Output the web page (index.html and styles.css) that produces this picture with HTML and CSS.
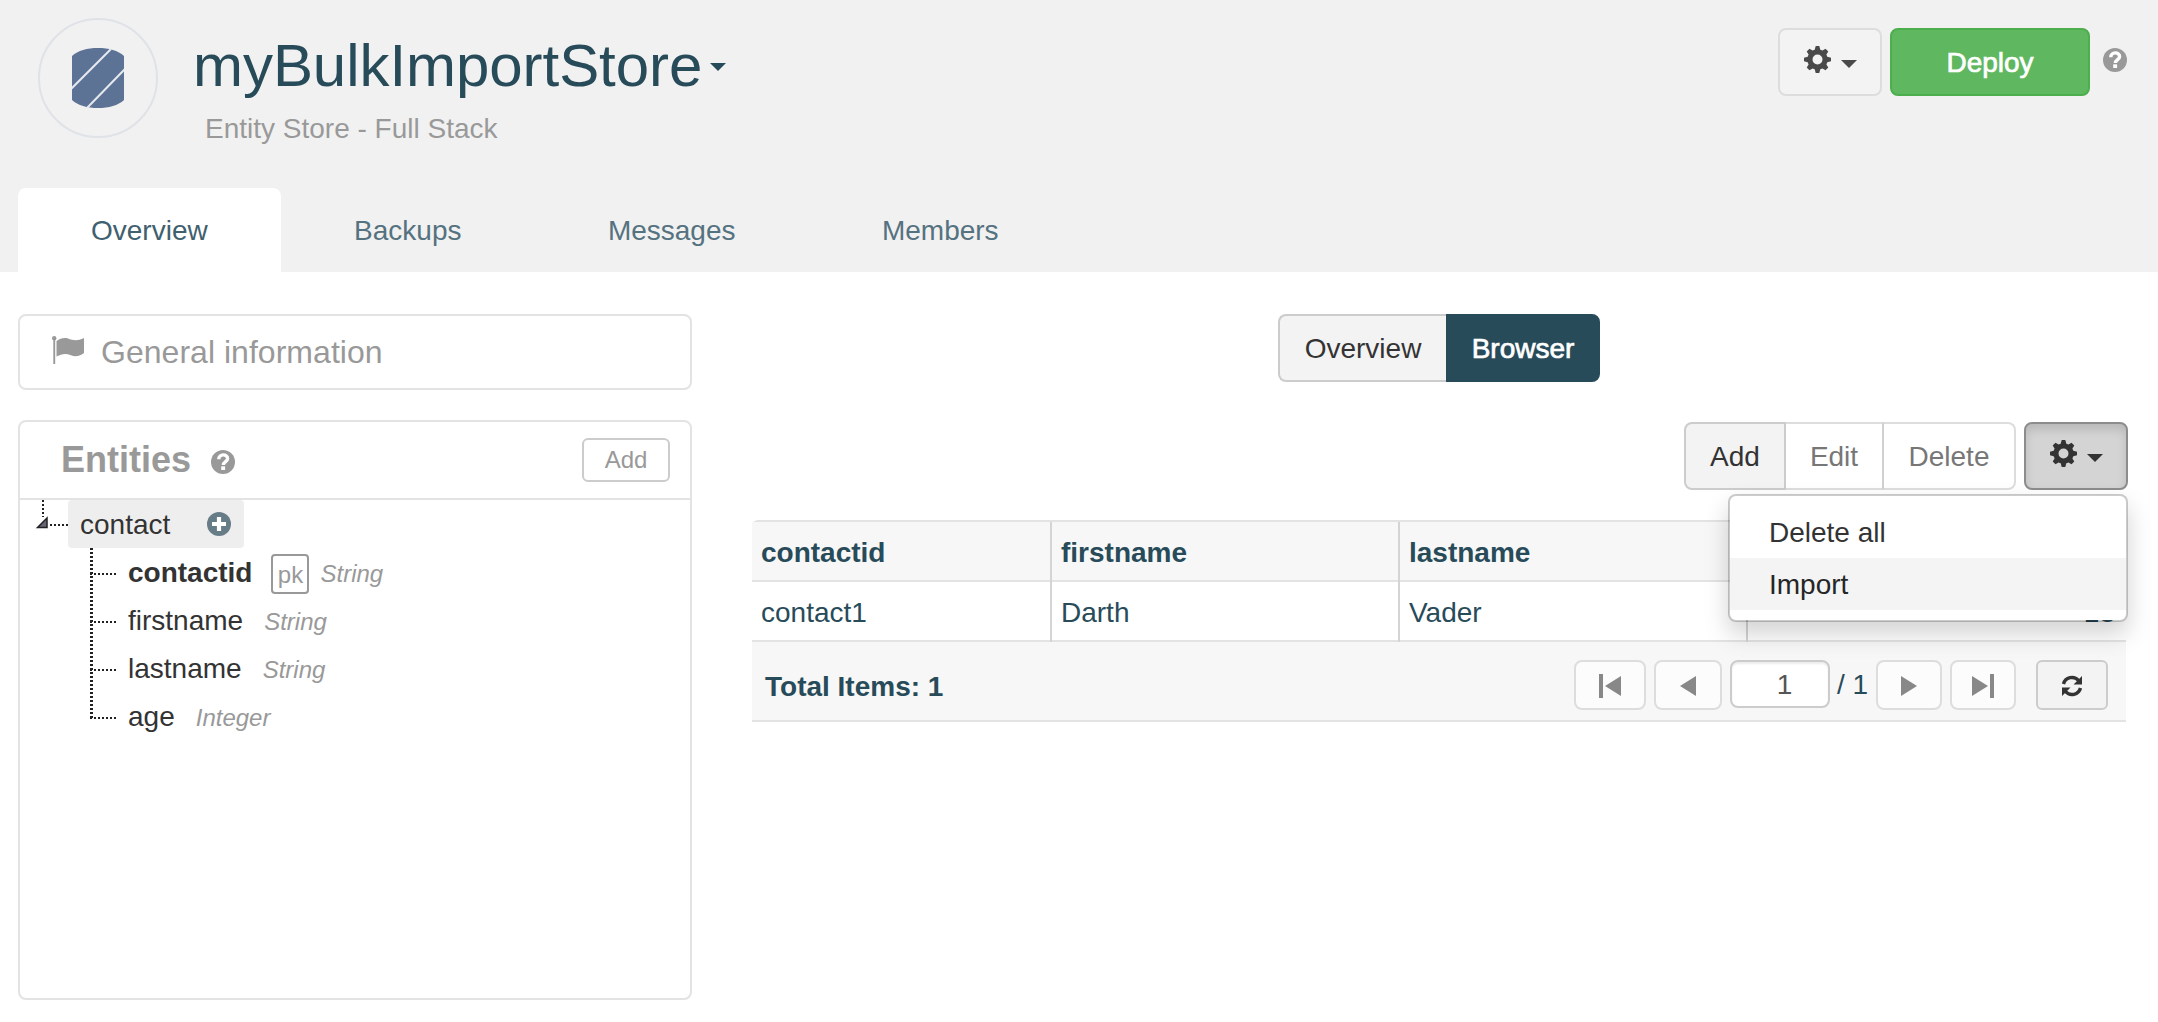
FILE: index.html
```
<!DOCTYPE html>
<html lang="en">
<head>
<meta charset="utf-8">
<title>myBulkImportStore</title>
<link rel="stylesheet" href="styles.css">
</head>
<body>
<svg class="defs" width="0" height="0">
  <symbol id="gear" viewBox="0 0 27 27"><path fill-rule="evenodd" d="M11.700 0h3.600l1 3.700 2.200.9 3-1.900 2.800 2.800-1.900 3 .9 2.200 3.700 1v3.600l-3.700 1-.9 2.200 1.900 3-2.800 2.800-3-1.900-2.200.9-1 3.700h-3.600l-1-3.700-2.200-.9-3 1.900-2.800-2.800 1.900-3-.9-2.200-3.700-1v-3.600l3.700-1 .9-2.200-1.900-3 2.800-2.800 3 1.900 2.200-.9zM13.500 8.500a5 5 0 1 0 0 10a5 5 0 1 0 0-10z"/></symbol>
  <symbol id="help" viewBox="0 0 24 24"><circle cx="12" cy="12" r="12"/><path d="M7.800 9.300C7.800 3.400 16.600 3.700 16.600 8.500C16.600 11.600 12.400 11.600 12.400 15" fill="none" stroke="#fff" stroke-width="3.400"/><path d="M10.200 16.300h3.900v3.700h-3.900z" fill="#fff"/></symbol>
</svg>
<header class="header">
  <div class="masthead">
    <div class="logo">
      <svg width="52" height="60" viewBox="0 0 52 60"><path d="M0 8C6 2.500 15 0 26 0s20 2.500 26 8v44c-6 5.500-15 8-26 8S6 57.500 0 52z" fill="#5d7396"/><path d="M-1 41L39 1M15 60L53 21" stroke="#e6e9ee" stroke-width="2"/></svg>
    </div>
    <div class="heading">
      <h1>myBulkImportStore<i class="caret"></i></h1>
      <p>Entity Store - Full Stack</p>
    </div>
    <div class="actions">
      <button class="btn gear-btn"><svg width="27" height="27"><use href="#gear"/></svg><i class="caret"></i></button>
      <button class="btn deploy">Deploy</button>
      <svg class="help" width="24" height="24"><use href="#help"/></svg>
    </div>
  </div>
  <nav class="tabs"><a class="active">Overview</a><a>Backups</a><a>Messages</a><a>Members</a></nav>
</header>
<main class="content">
  <aside class="side">
    <section class="card info">
      <svg width="32" height="28" viewBox="0 0 32 28"><circle cx="2.200" cy="2.200" r="2.200"/><path d="M1.300 2h1.900v26H1.300zM4.500 5C8 2.500 12 1.500 16 2.500c5 1.800 9 3 16-.5v15c-5 3.500-9 4-13 2.200-5-2-9-1.700-14.500 1.300z"/></svg>
      <span>General information</span>
    </section>
    <section class="card entities">
      <div class="card-head">
        <h2>Entities</h2>
        <svg width="24" height="24"><use href="#help"/></svg>
        <button class="small-btn">Add</button>
      </div>
      <div class="tree">
        <div class="root">
          <svg class="branch" width="34" height="48"><path d="M9 0v17" stroke="#222" stroke-width="2" stroke-dasharray="2 2"/><path d="M16 25h18" stroke="#222" stroke-width="2" stroke-dasharray="2 2"/><path d="M3.500 27.500L13 18v9.500z" fill="#667" stroke="#222" stroke-width="1.500"/></svg>
          <div class="node"><span>contact</span><svg width="24" height="24" viewBox="0 0 24 24"><circle cx="12" cy="12" r="12" fill="#667c87"/><path d="M12 5v14M5 12h14" stroke="#fff" stroke-width="4.200"/></svg></div>
        </div>
        <ul>
          <li><b>contactid</b><span class="pk">pk</span><em>String</em></li>
          <li><span>firstname</span><em>String</em></li>
          <li><span>lastname</span><em>String</em></li>
          <li><span>age</span><em>Integer</em></li>
        </ul>
      </div>
    </section>
  </aside>
  <section class="browser">
    <div class="toggle"><button class="btn">Overview</button><button class="btn on">Browser</button></div>
    <div class="toolbar">
      <div class="group"><button class="btn">Add</button><button class="btn off">Edit</button><button class="btn off">Delete</button></div>
      <div class="dropdown">
        <button class="btn gear-btn open"><svg width="27" height="27"><use href="#gear"/></svg><i class="caret"></i></button>
        <div class="menu"><a>Delete all</a><a class="hover">Import</a></div>
      </div>
    </div>
    <div class="grid">
      <div class="row head"><div>contactid</div><div>firstname</div><div>lastname</div><div></div></div>
      <div class="row"><div>contact1</div><div>Darth</div><div>Vader</div><div class="num">18</div></div>
      <div class="foot">
        <b>Total Items: 1</b>
        <div class="pager">
          <button class="page first"><svg width="24" height="24"><path d="M1 0h4v24H1zM7 12L23 2v20z"/></svg></button>
          <button class="page prev"><svg width="16" height="20"><path d="M0 10L16 0v20z"/></svg></button>
          <div class="input">1</div>
          <span class="of">/ 1</span>
          <button class="page next"><svg width="16" height="20"><path d="M16 10L0 0v20z"/></svg></button>
          <button class="page last"><svg width="24" height="24"><path d="M19 0h4v24h-4zM17 12L1 2v20z"/></svg></button>
          <button class="page refresh"><svg width="22" height="22" viewBox="0 0 22 22"><path d="M2.500 9A8.700 8.700 0 0 1 17.500 5.500M19.500 13A8.700 8.700 0 0 1 4.500 16.500" fill="none" stroke="#333" stroke-width="3.400"/><path d="M21 1v8.500h-8.500zM1 21v-8.500h8.500z" fill="#333"/></svg></button>
        </div>
      </div>
    </div>
  </section>
</main>
</body>
</html>
```
FILE: styles.css
```
* { box-sizing: border-box; }
body { margin: 0; width: 2158px; height: 1022px; overflow: hidden; background: #fff; color: #333; font: 28px/40px "Liberation Sans", Arial, sans-serif; }
.defs { position: absolute; }
svg { display: block; flex: none; }
h1, h2, p, ul { margin: 0; padding: 0; list-style: none; }
button { font: inherit; color: inherit; margin: 0; }
.caret { border: 8px solid transparent; border-top-color: currentColor; border-bottom: 0; }

.header { height: 272px; background: #f1f1f1; display: flex; flex-direction: column; justify-content: space-between; }
.masthead { display: flex; padding: 18px 31px 0 38px; }
.logo { width: 120px; height: 120px; border: 2px solid #dfe2e7; border-radius: 50%; display: flex; align-items: center; justify-content: center; }
.heading { margin-left: 35px; color: #284b5a; }
h1 { font-weight: 400; font-size: 60px; line-height: 66px; margin-top: 15px; letter-spacing: -.05px; display: flex; align-items: center; }
h1 .caret { margin: 2px 0 0 8px; }
.heading p { color: #999; margin: 10px 0 0 12px; }
.actions { display: flex; margin: 10px 0 0 auto; align-items: flex-start; }
.btn { height: 68px; border: 2px solid #ccc; border-radius: 8px; background: #f3f3f3; display: flex; align-items: center; justify-content: center; padding: 2px 25px 0; }
.gear-btn { width: 104px; padding: 0; border-color: #ddd; color: #4a4a4a; fill: currentColor; }
.gear-btn svg { margin-bottom: 5px; }
.gear-btn .caret { margin: 4px 0 0 10px; }
.deploy { width: 200px; margin-left: 8px; background: #5fb760; border-color: #4cae4c; color: #fff; -webkit-text-stroke: .7px #fff; }
.help { fill: #999; margin: 20px 0 0 13px; }
.tabs { display: flex; padding-left: 18px; }
.tabs a { height: 84px; line-height: 86px; padding: 0 73px; margin-right: .4px; color: #557280; border-radius: 8px 8px 0 0; }
.tabs .active { background: #fff; color: #40606e; }

.content { display: flex; padding: 42px 30px 0 18px; justify-content: space-between; }
.side { width: 674px; }
.card { border: 2px solid #e3e3e3; border-radius: 8px; color: #999; fill: #999; }
.info { height: 76px; display: flex; align-items: center; padding: 0 32px; font-size: 32px; }
.info span { margin: -1px 0 0 17px; letter-spacing: .03px; }
.info svg { margin-top: -4px; }
.entities { height: 580px; margin-top: 30px; }
.card-head { height: 78px; border-bottom: 2px solid #e3e3e3; display: flex; align-items: center; padding: 0 20px 0 41px; }
h2 { font-size: 36px; }
.card-head svg { margin: 3px 0 0 20px; }
.small-btn { width: 88px; height: 44px; margin-left: auto; padding: 0; background: #fff; border: 2px solid #ccc; border-radius: 6px; font-size: 24px; line-height: 40px; }
.tree { padding-left: 14px; color: #333; }
.root { display: flex; }
.node { width: 176px; height: 48px; background: #eee; border-radius: 4px; display: flex; align-items: center; justify-content: space-between; padding: 0 13px 0 12px; }
.node span { padding-top: 2px; }
.tree ul { margin-left: 36px; position: relative; }
.tree ul::before { content: ""; position: absolute; left: 20px; top: 0; width: 3px; height: 170px; background: repeating-linear-gradient(#222 0 2px, transparent 2px 4px); }
.tree li { height: 48px; display: flex; align-items: center; padding-left: 20px; }
.tree li::before { content: ""; width: 26px; height: 2px; margin: 3px 12px 0 0; background: repeating-linear-gradient(90deg, #222 0 2px, transparent 2px 4px); }
.tree li > b, .tree li > span:first-child { padding-top: 2px; }
.tree em { margin-left: 21px; margin-top: 4px; font-size: 24px; color: #999; }
.pk { width: 38px; height: 40px; margin: 4px -10px 0 19px; border: 2px solid #999; border-radius: 4px; color: #999; font-size: 24px; line-height: 37px; text-align: center; }

.browser { width: 1376px; display: flex; flex-direction: column; }
.toggle { display: flex; align-self: center; margin-left: -2px; }
.toggle .btn:first-child { width: 168px; border-radius: 8px 0 0 8px; border-right: 0; }
.toggle .on { width: 154px; border-radius: 0 8px 8px 0; background: #284b5a; border-color: #284b5a; color: #fff; -webkit-text-stroke: .7px #fff; }
.toolbar { display: flex; justify-content: flex-end; gap: 8px; margin-top: 40px; }
.group { display: flex; }
.group .btn { width: 102px; border-radius: 8px 0 0 8px; }
.group .off { width: 98px; background: #fff; border-color: #ddd; border-left: 0; border-right-color: #d0d0d0; border-radius: 0; color: #777; }
.group .off:last-child { width: 132px; border-right-color: #ddd; border-radius: 0 8px 8px 0; }
.dropdown { position: relative; }
.btn.open { background: #d4d4d4; border-color: #8c8c8c; color: #333; box-shadow: inset 0 6px 10px rgba(0,0,0,.125); }
.menu { position: absolute; right: 0; top: 72px; width: 400px; height: 128px; padding: 10px 0; background: #fff; background-clip: padding-box; border: 2px solid rgba(0,0,0,.2); border-radius: 8px; box-shadow: 0 12px 24px rgba(0,0,0,.175); z-index: 2; }
.menu a { display: block; height: 52px; line-height: 54px; padding-left: 39px; }
.menu .hover { background: #f4f4f4; color: #262626; }
.grid { width: 1374px; margin-top: 30px; border-top: 2px solid #e3e3e3; border-radius: 6px 6px 0 0; color: #284b5a; }
.row { height: 60px; display: grid; grid-template-columns: 300px 348px 348px 378px; border-bottom: 2px solid #e3e3e3; line-height: 62px; }
.row div { padding: 0 9px; border-right: 2px solid #d4d4d4; height: 60px; }
.row div:last-child { border: 0; }
.head { background: #f7f7f7; font-weight: 700; }
.row .num { text-align: right; padding-right: 11px; }
.foot { height: 80px; background: #f7f7f7; border-bottom: 2px solid #e3e3e3; display: flex; align-items: center; justify-content: space-between; padding: 0 18px 0 13px; }
.foot b { margin-top: 12px; }
.pager { display: flex; align-items: flex-start; margin-top: 8px; }
.page { height: 50px; padding: 0; border: 2px solid #ddd; border-radius: 8px; background: #fcfcfc; display: flex; align-items: center; justify-content: center; fill: #888; margin-right: 8px; padding-top: 2px; }
.first { width: 72px; }
.prev { width: 68px; }
.next { width: 66px; }
.last { width: 66px; }
.page.refresh { width: 72px; margin: 0 0 0 12px; border-color: #ccc; border-radius: 6px; background: #f3f3f3; }
.input { width: 100px; height: 48px; border: 2px solid #ccc; border-radius: 8px; background: #fff; box-shadow: inset 0 2px 2px rgba(0,0,0,.075); color: #555; text-align: center; line-height: 45px; padding-left: 9px; }
.of { width: 46px; padding-left: 7px; line-height: 49px; white-space: nowrap; }
```
